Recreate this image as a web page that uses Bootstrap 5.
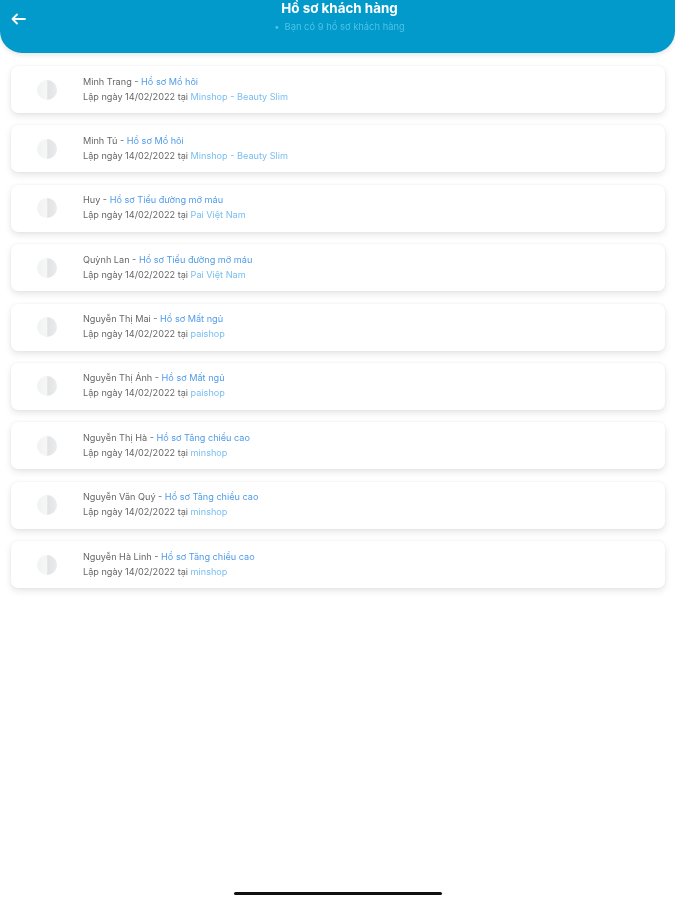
<!DOCTYPE html>
<html lang="vi">
<head>
<meta charset="utf-8">
<title>Hồ sơ khách hàng</title>
<link href="https://cdn.jsdelivr.net/npm/bootstrap@5.3.0/dist/css/bootstrap.min.css" rel="stylesheet">
<style>
html,body{height:100%;background:#fff}
body{font-family:Inter,"Noto Sans",sans-serif;overflow:hidden}
.app-screen{height:900px;width:675px}
.app-head{height:53px;background:#019aca;border-radius:0 0 22px 22px;box-shadow:0 2px 5px rgba(0,0,0,.1);padding:0 19px 0 23px}
.app-back{width:15px;height:12px;top:13px;left:11px;filter:blur(.3px)}
.app-title{font-size:13.4px;font-weight:700;line-height:16px;color:#fff;text-align:center;filter:blur(.3px)}
.app-sub{font-size:9.4px;line-height:12px;color:#4cc3ea;text-align:center;margin-top:5px;filter:blur(.4px)}
.app-sub-dot{margin-right:5px}
.app-list{padding:13px 10px 0 11px;gap:12.4px}
.rec-item{height:47px;background:#fff;border-radius:7px;box-shadow:0 3px 7px rgba(0,0,0,.1),0 0 3px rgba(0,0,0,.05);padding-left:26px}
.rec-ball{width:20px;height:20px;border-radius:50%;flex:none;background:linear-gradient(90deg,#f0f3f3 0%,#f6f6f6 48%,#e2e3e4 54%,#eaebec 100%);margin-right:26px;filter:blur(.4px)}
.rec-text{font-size:9.15px;line-height:15px;color:#666;filter:blur(.4px);padding-bottom:2px}
.rec-link{color:#4f9be8}
.rec-shop{color:#77bdf0}
.home-bar{width:208px;height:3px;border-radius:2px;background:#111;bottom:5px;left:234px}
</style>
</head>
<body>
<div class="app-screen position-relative">
  <header class="app-head position-relative">
    <svg class="app-back position-absolute" viewBox="0 0 15 12" fill="none" stroke="#fff" stroke-width="1.8" stroke-linecap="round" stroke-linejoin="round"><path d="M14 6H1.500M6 1.500 1.500 6 6 10.500"/></svg>
    <div class="app-title">Hồ sơ khách hàng</div>
    <div class="app-sub"><span class="app-sub-dot">•</span>Bạn có 9 hồ sơ khách hàng</div>
  </header>
  <main class="app-list d-flex flex-column">
    <div class="rec-item d-flex align-items-center"><div class="rec-ball"></div><div class="rec-text"><div>Minh Trang - <span class="rec-link">Hồ sơ Mồ hôi</span></div><div>Lập ngày 14/02/2022 tại <span class="rec-shop">Minshop - Beauty Slim</span></div></div></div>
    <div class="rec-item d-flex align-items-center"><div class="rec-ball"></div><div class="rec-text"><div>Minh Tú - <span class="rec-link">Hồ sơ Mồ hôi</span></div><div>Lập ngày 14/02/2022 tại <span class="rec-shop">Minshop - Beauty Slim</span></div></div></div>
    <div class="rec-item d-flex align-items-center"><div class="rec-ball"></div><div class="rec-text"><div>Huy - <span class="rec-link">Hồ sơ Tiểu đường mỡ máu</span></div><div>Lập ngày 14/02/2022 tại <span class="rec-shop">Pai Việt Nam</span></div></div></div>
    <div class="rec-item d-flex align-items-center"><div class="rec-ball"></div><div class="rec-text"><div>Quỳnh Lan - <span class="rec-link">Hồ sơ Tiểu đường mỡ máu</span></div><div>Lập ngày 14/02/2022 tại <span class="rec-shop">Pai Việt Nam</span></div></div></div>
    <div class="rec-item d-flex align-items-center"><div class="rec-ball"></div><div class="rec-text"><div>Nguyễn Thị Mai - <span class="rec-link">Hồ sơ Mất ngủ</span></div><div>Lập ngày 14/02/2022 tại <span class="rec-shop">paishop</span></div></div></div>
    <div class="rec-item d-flex align-items-center"><div class="rec-ball"></div><div class="rec-text"><div>Nguyễn Thị Ánh - <span class="rec-link">Hồ sơ Mất ngủ</span></div><div>Lập ngày 14/02/2022 tại <span class="rec-shop">paishop</span></div></div></div>
    <div class="rec-item d-flex align-items-center"><div class="rec-ball"></div><div class="rec-text"><div>Nguyễn Thị Hà - <span class="rec-link">Hồ sơ Tăng chiều cao</span></div><div>Lập ngày 14/02/2022 tại <span class="rec-shop">minshop</span></div></div></div>
    <div class="rec-item d-flex align-items-center"><div class="rec-ball"></div><div class="rec-text"><div>Nguyễn Văn Quý - <span class="rec-link">Hồ sơ Tăng chiều cao</span></div><div>Lập ngày 14/02/2022 tại <span class="rec-shop">minshop</span></div></div></div>
    <div class="rec-item d-flex align-items-center"><div class="rec-ball"></div><div class="rec-text"><div>Nguyễn Hà Linh - <span class="rec-link">Hồ sơ Tăng chiều cao</span></div><div>Lập ngày 14/02/2022 tại <span class="rec-shop">minshop</span></div></div></div>
  </main>
  <div class="home-bar position-absolute"></div>
</div>
<script src="https://cdn.jsdelivr.net/npm/bootstrap@5.3.0/dist/js/bootstrap.bundle.min.js"></script>
</body>
</html>
